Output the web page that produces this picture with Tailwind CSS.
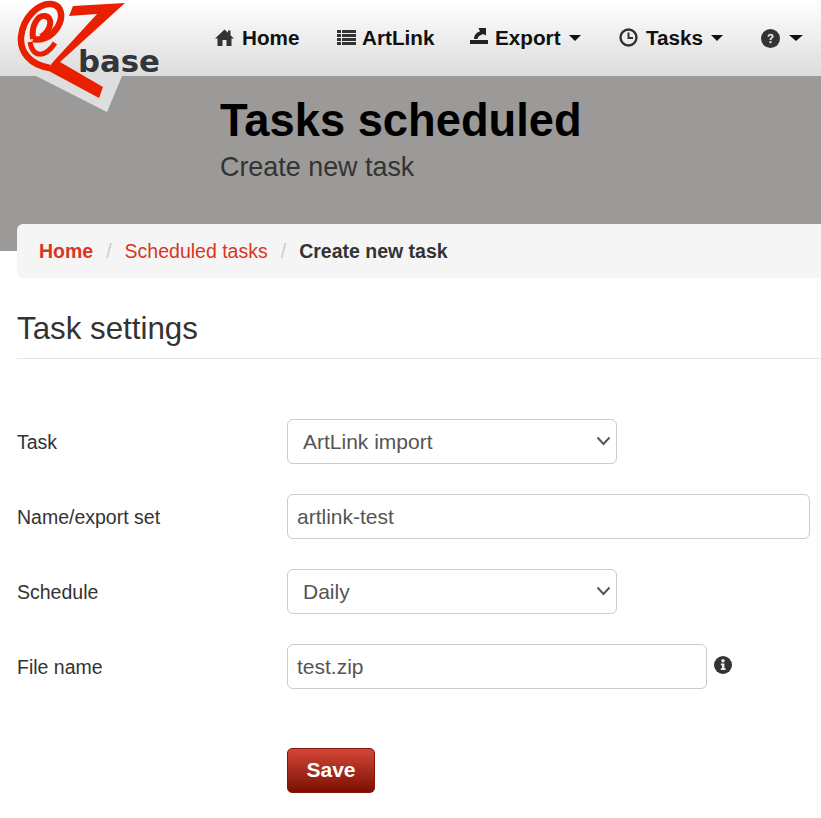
<!DOCTYPE html>
<html lang="en">
<head>
  <meta charset="UTF-8" />
  <title>Tasks scheduled</title>
  <script src="https://cdn.jsdelivr.net/npm/@tailwindcss/browser@4"></script>
</head>
<body class="bg-white font-['Liberation_Sans',Arial,sans-serif] text-[#333] overflow-hidden">
<div class="relative w-[821px] h-[818px] overflow-hidden">

  <!-- Logo -->
  <a href="#" class="absolute left-0 top-0 z-10 w-[170px] h-[115px]">
    <svg width="170" height="115" viewBox="0 0 170 115">
      <polygon points="36,76 122,76 107,112" fill="#dedede"/>
      <polygon points="73,6 125,3 60,62 103,87 99,98 47,70 53,62 97,14 69,16" fill="#e81f00"/>
      <path d="M50 68 C30 65 20 52 21 37 C23 17 39 3 51 4 C62 5 64 17 57 28 C51 37 42 41 33 39" fill="none" stroke="#e81f00" stroke-width="6.5"/>
      <path d="M33 39 C31 25 38 15 45 16 C53 17 52 30 41 37" fill="none" stroke="#e81f00" stroke-width="6"/>
      <path d="M30 42 C33 58 45 58 55 43" fill="none" stroke="#e81f00" stroke-width="5"/>
      <text x="78" y="72" font-family="'DejaVu Sans',sans-serif" font-size="31" font-weight="700" fill="#33353c" textLength="82" lengthAdjust="spacingAndGlyphs">base</text>
    </svg>
  </a>

  <!-- Navbar -->
  <header class="h-[76px] bg-gradient-to-b from-white to-[#dcdcdc] pl-[215px] flex items-center text-[20.7px] font-bold text-[#111]">
    <a href="#" class="flex items-center w-[122px]">
      <svg class="mr-[8px]" width="19" height="17" viewBox="0 0 19 17"><path d="M9.5 0.5 L13 3.8 V1.5 H15.5 V6.2 L19 9.5 H16.5 V17 H11.5 V11 H7.5 V17 H2.5 V9.5 H0 Z" fill="#333"/></svg>
      Home
    </a>
    <a href="#" class="flex items-center w-[133px]">
      <svg class="mr-[6px]" width="19" height="17" viewBox="0 0 19 17" fill="#333"><rect y="1" width="4" height="3"/><rect x="5" y="1" width="14" height="3"/><rect y="5" width="4" height="3"/><rect x="5" y="5" width="14" height="3"/><rect y="9" width="4" height="3"/><rect x="5" y="9" width="14" height="3"/><rect y="13" width="4" height="3"/><rect x="5" y="13" width="14" height="3"/></svg>
      ArtLink
    </a>
    <a href="#" class="flex items-center w-[149px]">
      <svg class="mr-[7px] mt-[-3px]" width="18" height="18" viewBox="0 0 18 18" fill="#222"><rect y="13" width="18" height="4"/><path d="M4 12 C4 8 7 5 10 4.5 L8.5 1 H16 V8.5 L13 7 C11 8 8 9 7.5 12 Z"/></svg>
      Export
      <span class="ml-[8px] border-x-[6px] border-x-transparent border-t-[6px] border-t-[#111]"></span>
    </a>
    <a href="#" class="flex items-center w-[142px]">
      <svg class="mr-[8px]" width="19" height="19" viewBox="0 0 19 19" fill="none" stroke="#333"><circle cx="9.5" cy="9.5" r="8" stroke-width="2.4"/><path d="M9.5 4.5 V10 H14" stroke-width="2"/></svg>
      Tasks
      <span class="ml-[8px] border-x-[6.5px] border-x-transparent border-t-[6px] border-t-[#111]"></span>
    </a>
    <a href="#" class="flex items-center">
      <svg class="mr-[9px]" width="19" height="19" viewBox="0 0 19 19"><circle cx="9.5" cy="9.5" r="9.5" fill="#333"/><path d="M6.5 7.5 C6.5 3.8 12.7 3.8 12.7 7.3 C12.7 9.5 10.4 9.4 10.4 11 H8.5 C8.5 8.6 10.6 8.7 10.6 7.4 C10.6 6 8.5 6 8.3 7.8 Z" fill="#e0e0e0"/><rect x="8.5" y="12" width="2" height="2.2" fill="#e0e0e0"/></svg>
      <span class="border-x-[7px] border-x-transparent border-t-[6px] border-t-[#111]"></span>
    </a>
  </header>

  <!-- Page title -->
  <section class="h-[175px] bg-[#9b9a98] pl-[220px] pt-[18px]">
    <h1 class="text-[45.3px] leading-[54px] font-bold text-black">Tasks scheduled</h1>
    <p class="text-[26.9px] leading-[38px] text-[#333]">Create new task</p>
  </section>

  <!-- Breadcrumb -->
  <nav class="relative ml-[17px] w-[830px] mt-[-27px] h-[54px] rounded-[6px] bg-[#f5f5f5] pl-[22px] pt-[1px] flex items-center text-[19.5px] text-[#d9361e]">
    <a href="#" class="font-bold">Home</a>
    <span class="mx-[13px] text-[#ccc]">/</span>
    <a href="#">Scheduled tasks</a>
    <span class="mx-[13px] text-[#ccc]">/</span>
    <span class="font-bold text-[#333]">Create new task</span>
  </nav>

  <main class="px-[17px]">
    <h2 class="mt-[29px] text-[31.3px] leading-[43px] pb-[8px] w-[804px] border-b border-[#e5e5e5]">Task settings</h2>

    <form class="mt-[60px] text-[21px] text-[#555]">
      <div class="flex items-center h-[45px]">
        <label class="w-[270px] shrink-0 pt-[2px] text-[19.5px] text-[#333]">Task</label>
        <div class="relative w-[330px] shrink-0">
          <div class="h-[45px] rounded-[6px] border border-[#ccc] pl-[15px] flex items-center">ArtLink import</div>
          <svg class="absolute right-[6px] top-[17px]" width="15" height="10" viewBox="0 0 15 10"><path d="M1.5 1.5 L7.5 8 L13.5 1.5" fill="none" stroke="#555" stroke-width="1.9"/></svg>
        </div>
      </div>
      <div class="flex items-center h-[45px] mt-[30px]">
        <label class="w-[270px] shrink-0 pt-[2px] text-[19.5px] text-[#333]">Name/export set</label>
        <input class="w-[523px] shrink-0 h-[45px] rounded-[6px] border border-[#ccc] px-[9px]" value="artlink-test" />
      </div>
      <div class="flex items-center h-[45px] mt-[30px]">
        <label class="w-[270px] shrink-0 pt-[2px] text-[19.5px] text-[#333]">Schedule</label>
        <div class="relative w-[330px] shrink-0">
          <div class="h-[45px] rounded-[6px] border border-[#ccc] pl-[15px] flex items-center">Daily</div>
          <svg class="absolute right-[6px] top-[17px]" width="15" height="10" viewBox="0 0 15 10"><path d="M1.5 1.5 L7.5 8 L13.5 1.5" fill="none" stroke="#555" stroke-width="1.9"/></svg>
        </div>
      </div>
      <div class="flex items-center h-[45px] mt-[30px]">
        <label class="w-[270px] shrink-0 pt-[2px] text-[19.5px] text-[#333]">File name</label>
        <input class="w-[420px] shrink-0 h-[45px] rounded-[6px] border border-[#ccc] px-[9px]" value="test.zip" />
        <svg class="ml-[7px] mb-[3px]" width="18" height="18" viewBox="0 0 18 18"><circle cx="9" cy="9" r="9" fill="#333"/><circle cx="9" cy="4.7" r="1.7" fill="#eee"/><path d="M6.8 7.4 H10.4 V12.2 H11.6 V14 H6.8 V12.2 H8 V9.2 H6.8 Z" fill="#eee"/></svg>
      </div>
      <div class="mt-[59px] pl-[270px]">
        <button type="button" class="w-[88px] h-[45px] rounded-[5px] border border-[#8a1408] bg-gradient-to-b from-[#d44637] to-[#7a0f02] text-white font-bold pb-[2px]">Save</button>
      </div>
    </form>
  </main>
</div>
</body>
</html>
